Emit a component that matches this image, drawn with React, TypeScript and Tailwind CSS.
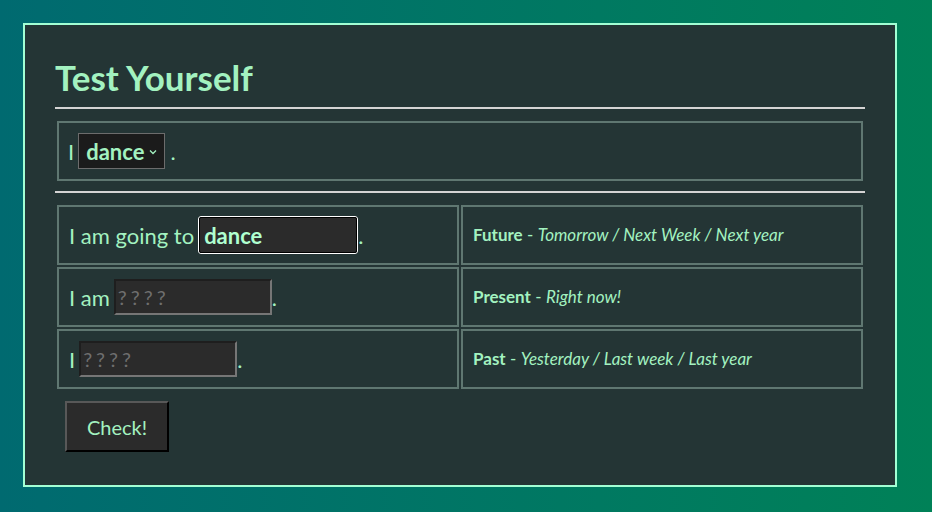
import React from "react";

const green = "text-[#a3f2c0]";

function Row({ lead, input, label, desc }: { lead: string; input: React.ReactNode; label: string; desc: string }) {
  return (
    <div className="flex gap-[2px] h-[60px]">
      <div className="w-[402px] border-2 border-[#5f7771] flex items-center pl-[10px] text-[22px]">
        <span className="mr-[4px]">{lead}</span>
        {input}
        <span>.</span>
      </div>
      <div className="w-[402px] border-2 border-[#5f7771] flex items-center pl-[10px] text-[17px]">
        <b className="font-bold">{label}</b>
        <span>&nbsp;-&nbsp;</span>
        <i className="italic">{desc}</i>
      </div>
    </div>
  );
}

function EmptyInput({ w }: { w: string }) {
  return (
    <div className={`${w} h-[36px] bg-[#2b2b2b] border-2 border-t-[#1e1e1e] border-l-[#1e1e1e] border-b-[#767676] border-r-[#767676] flex items-center pl-[2px] text-[20px] text-[#6f6f6f] tracking-[4px]`}>
      ????
    </div>
  );
}

export default function App() {
  return (
    <div
      className={`w-[932px] h-[512px] pt-[23px] pl-[23px] bg-gradient-to-r from-[#006a70] to-[#008157] ${green}`}
      style={{ fontFamily: "Lato, 'Open Sans', sans-serif" }}
    >
      <div className="w-[874px] h-[464px] border-2 border-[#a2ffd4] bg-[#243535] px-[30px] pt-[30px]">
        <h1 className="text-[35px] font-bold leading-[40px] h-[46px] pt-[2px]">Test Yourself</h1>
        <div className="h-[2px] bg-[#d4d4d4] mt-[6px]" />
        <div className="mt-[12px] mx-[2px] h-[60px] border-2 border-[#5f7771] flex items-center pl-[9px] text-[22px]">
          <span className="mr-[4px]">I</span>
          <div className="h-[36px] bg-[#1b1b1b] border border-[#6c6c6c] flex items-center pl-[7px] pr-[6px] font-bold text-[22px]">
            dance
            <svg width="10" height="10" viewBox="0 0 10 10" className="ml-[4px] mt-[2px]">
              <path d="M2 3.5 L5 6.5 L8 3.5" stroke="currentColor" strokeWidth="1.3" fill="none" />
            </svg>
          </div>
          <span className="ml-[5px]">.</span>
        </div>
        <div className="h-[2px] bg-[#d4d4d4] mt-[10px]" />
        <div className="mt-[12px] mx-[2px] flex flex-col gap-[2px]">
          <Row
            lead="I am going to"
            input={
              <div className="w-[160px] h-[38px] bg-[#2b2b2b] border border-white rounded-[3px] outline outline-1 outline-black -outline-offset-2 flex items-center pl-[5px] font-bold text-[22px] text-[#b0ffd0]">
                dance
              </div>
            }
            label="Future"
            desc="Tomorrow / Next Week / Next year"
          />
          <Row lead="I am" input={<EmptyInput w="w-[158px]" />} label="Present" desc="Right now!" />
          <Row lead="I" input={<EmptyInput w="w-[158px]" />} label="Past" desc="Yesterday / Last week / Last year" />
        </div>
        <button className="mt-[12px] ml-[10px] w-[104px] h-[51px] bg-[#2b2b2b] border-2 border-t-[#585858] border-l-[#585858] border-b-black border-r-black text-[20px]">
          Check!
        </button>
      </div>
    </div>
  );
}
